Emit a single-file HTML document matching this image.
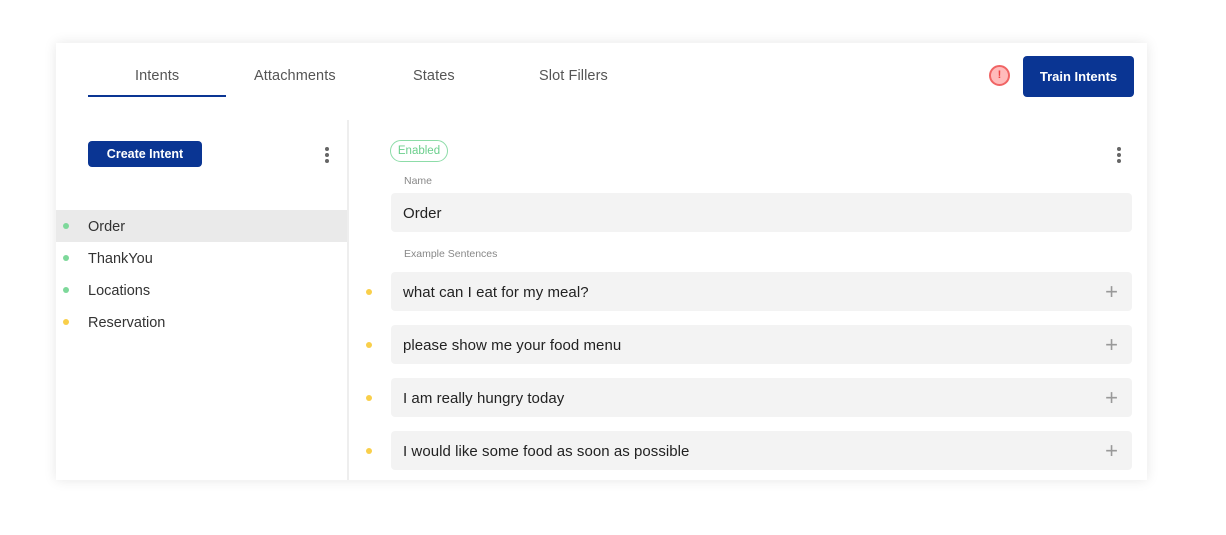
<!DOCTYPE html>
<html><head><style>
*{box-sizing:border-box;margin:0;padding:0}
body{width:1226px;height:535px;background:#fff;font-family:"Liberation Sans",sans-serif;position:relative;overflow:hidden}
.card{position:absolute;left:56px;top:43px;width:1091px;height:437px;background:#fff;box-shadow:0 0 12px rgba(0,0,0,.10)}
.a{position:absolute}
.tab{position:absolute;top:68px;font-size:14.5px;color:#555;letter-spacing:.1px}
.btn{position:absolute;background:#0a3593;color:#fff;font-weight:bold;border-radius:4px;display:flex;align-items:center;justify-content:center}
.dots{position:absolute;width:4px}
.dots i{display:block;width:4px;height:4px;border-radius:50%;background:#666;margin-bottom:2px}
.item{position:absolute;left:88px;font-size:14.5px;color:#333}
.dot{position:absolute;width:6px;height:6px;border-radius:50%}
.row{position:absolute;left:391px;width:741px;height:39px;background:#f3f3f3;border-radius:4px;font-size:15px;letter-spacing:.05px;color:#222;padding-left:12px;line-height:41px}
.row span{position:absolute;right:14px;top:0;color:#999;font-size:22px;font-weight:300;line-height:39px}
</style></head><body>
<div class="card"></div>
<div class="tab" style="left:135px">Intents</div>
<div class="a" style="left:88px;top:95px;width:138px;height:2px;background:#0a3593"></div>
<div class="tab" style="left:254px">Attachments</div>
<div class="tab" style="left:413px">States</div>
<div class="tab" style="left:539px">Slot Fillers</div>
<div class="a" style="left:989px;top:65px;width:21px;height:21px;border-radius:50%;background:#fbb;border:2px solid #f06464;color:#e44;font-size:11px;font-weight:bold;text-align:center;line-height:17px">!</div>
<div class="btn" style="left:1023px;top:56px;width:111px;height:41px;font-size:13px">Train Intents</div>
<div class="btn" style="left:88px;top:141px;width:114px;height:26px;font-size:12.5px">Create Intent</div>
<div class="dots" style="left:325px;top:147px"><i></i><i></i><i></i></div>
<div class="a" style="left:347px;top:120px;width:2px;height:360px;background:#eee"></div>
<div class="a" style="left:56px;top:210px;width:291px;height:32px;background:#eaeaea"></div>
<div class="dot" style="left:63px;top:223px;background:#7dd89a"></div><div class="item" style="top:219px">Order</div>
<div class="dot" style="left:63px;top:255px;background:#7dd89a"></div><div class="item" style="top:251px">ThankYou</div>
<div class="dot" style="left:63px;top:287px;background:#7dd89a"></div><div class="item" style="top:283px">Locations</div>
<div class="dot" style="left:63px;top:319px;background:#f9cf4a"></div><div class="item" style="top:315px">Reservation</div>
<div class="a" style="left:390px;top:140px;width:58px;height:22px;border:1px solid #8ddca8;border-radius:11px;color:#6ccf8d;font-size:11.5px;text-align:center;line-height:21px">Enabled</div>
<div class="dots" style="left:1117px;top:147px"><i></i><i></i><i></i></div>
<div class="a" style="left:404px;top:175px;font-size:10.5px;color:#888">Name</div>
<div class="row" style="top:193px">Order</div>
<div class="a" style="left:404px;top:248px;font-size:10.5px;color:#888">Example Sentences</div>
<div class="dot" style="left:366px;top:289px;background:#f9cf4a"></div>
<div class="row" style="top:272px">what can I eat for my meal?<span>+</span></div>
<div class="dot" style="left:366px;top:342px;background:#f9cf4a"></div>
<div class="row" style="top:325px">please show me your food menu<span>+</span></div>
<div class="dot" style="left:366px;top:395px;background:#f9cf4a"></div>
<div class="row" style="top:378px">I am really hungry today<span>+</span></div>
<div class="dot" style="left:366px;top:448px;background:#f9cf4a"></div>
<div class="row" style="top:431px">I would like some food as soon as possible<span>+</span></div>
</body></html>
